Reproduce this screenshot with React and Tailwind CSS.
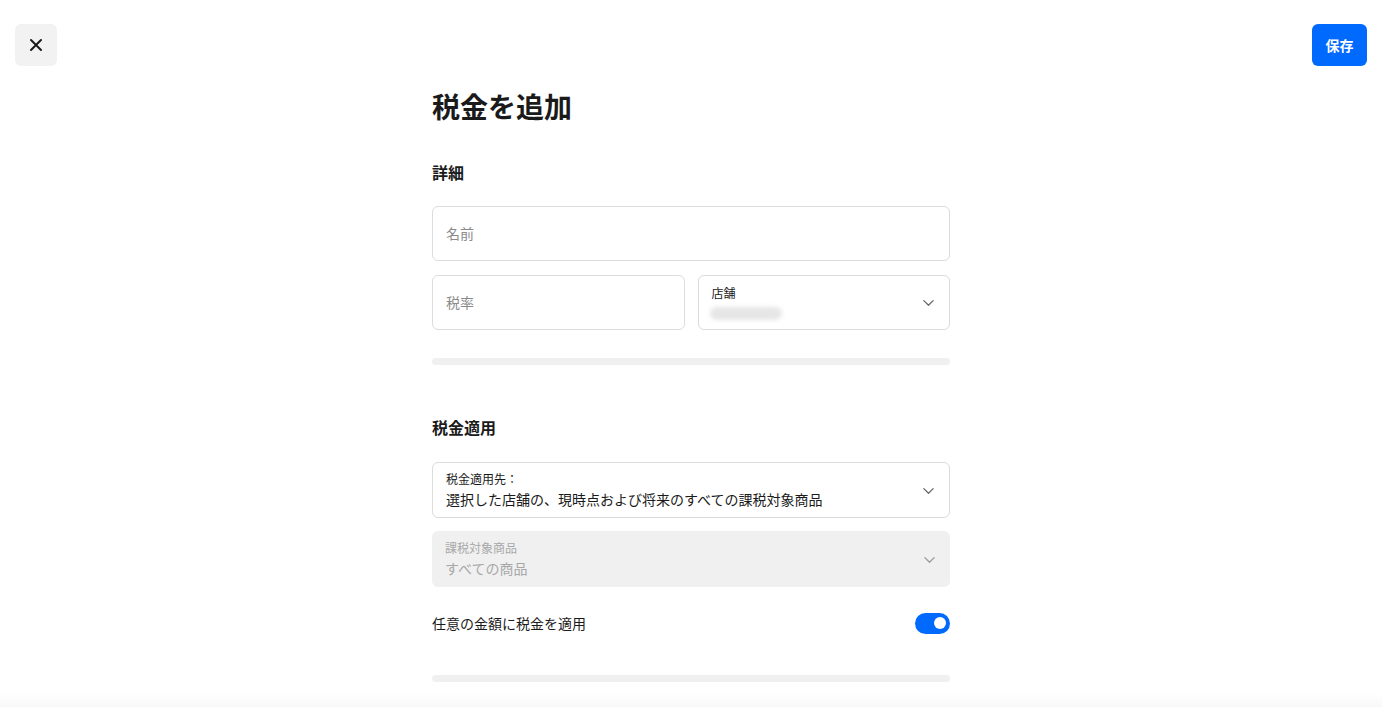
import React from 'react';

const font = { fontFamily: '"Noto Sans CJK JP", "Noto Sans", sans-serif' };

const Chevron = ({ className = '' }) => (
  <svg width="15" height="15" viewBox="0 0 16 16" fill="none" className={className}>
    <path d="M3 6l5 5 5-5" stroke="currentColor" strokeWidth="1.4" strokeLinecap="round" strokeLinejoin="round" />
  </svg>
);

const Divider = () => <div className="h-[7px] w-full rounded-sm bg-[#f0f0f0]" />;

export default function App() {
  return (
    <div className="relative h-[707px] w-full overflow-hidden bg-white text-[#1a1a1a]" style={font}>
      <div className="flex items-start justify-between px-[15px] pt-[24px]">
        <button className="flex h-[42px] w-[42px] items-center justify-center rounded-md bg-[#f2f2f2]">
          <svg width="14" height="14" viewBox="0 0 14 14">
            <path d="M2 2l10 10M12 2L2 12" stroke="#1a1a1a" strokeWidth="2" strokeLinecap="round" />
          </svg>
        </button>
        <button className="h-[42px] w-[55px] rounded-md bg-[#006aff] text-[14px] font-semibold text-white">保存</button>
      </div>

      <div className="mt-[20px] ml-[432px] w-[518px]">
        <h1 className="text-[28px] font-bold leading-[40px]">税金を追加</h1>

        <h2 className="mt-[34px] text-[16px] font-bold leading-[24px]">詳細</h2>

        <div className="mt-[22px] flex h-[55px] items-center rounded-md border border-[#dcdcdc] px-[13px] text-[14px] text-[#8a8a8a]">
          名前
        </div>

        <div className="mt-[14px] flex gap-[13px]">
          <div className="flex h-[55px] flex-1 items-center rounded-md border border-[#dcdcdc] px-[13px] text-[14px] text-[#8a8a8a]">
            税率
          </div>
          <div className="flex h-[55px] flex-1 items-center justify-between rounded-md border border-[#dcdcdc] px-[13px]">
            <div className="-mt-[2px] flex flex-col">
              <span className="text-[12px] leading-[18px] text-[#1a1a1a]">店舗</span>
              <div className="-ml-[2px] mt-[5px] h-[13px] w-[72px] rounded-full bg-[#e6e6e6] blur-[2px]" />
            </div>
            <Chevron className="text-[#6b6b6b]" />
          </div>
        </div>

        <div className="mt-[28px]">
          <Divider />
        </div>

        <h2 className="mt-[50px] text-[16px] font-bold leading-[24px]">税金適用</h2>

        <div className="mt-[23px] flex h-[56px] items-center justify-between rounded-md border border-[#dcdcdc] px-[13px]">
          <div className="flex flex-col">
            <span className="text-[12px] leading-[18px]">税金適用先：</span>
            <span className="text-[14px] leading-[22px]">選択した店舗の、現時点および将来のすべての課税対象商品</span>
          </div>
          <Chevron className="text-[#6b6b6b]" />
        </div>

        <div className="mt-[13px] flex h-[56px] items-center justify-between rounded-md bg-[#f0f0f0] px-[13px]">
          <div className="flex flex-col">
            <span className="text-[12px] leading-[18px] text-[#a8a8a8]">課税対象商品</span>
            <span className="text-[14px] leading-[22px] text-[#a8a8a8]">すべての商品</span>
          </div>
          <Chevron className="text-[#9a9a9a]" />
        </div>

        <div className="mt-[25px] flex items-center justify-between">
          <span className="text-[14px] leading-[22px]">任意の金額に税金を適用</span>
          <div className="flex h-[21px] w-[35px] items-center justify-end rounded-full bg-[#006aff] pr-[4px]">
            <div className="h-[12px] w-[12px] rounded-full bg-white" />
          </div>
        </div>

        <div className="mt-[41px]">
          <Divider />
        </div>
      </div>

      <div className="absolute bottom-0 left-0 right-0 h-[14px] bg-gradient-to-b from-white to-[#f8f8f8]" />
    </div>
  );
}
